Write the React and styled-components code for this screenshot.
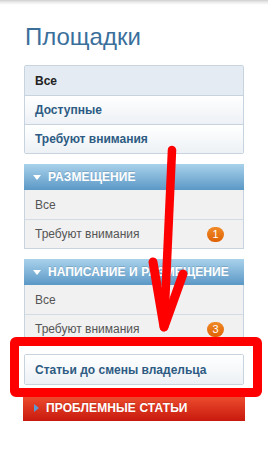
import React from "react";
import styled, { createGlobalStyle } from "styled-components";

const Global = createGlobalStyle`
  html, body { margin: 0; padding: 0; background: #fff; }
  body { font-family: "Liberation Sans", Arial, sans-serif; }
  * { box-sizing: border-box; }
`;

const Page = styled.div`
  position: relative;
  width: 268px;
  height: 451px;
  overflow: hidden;
  background: #fff;
`;

const TopShadow = styled.div`
  height: 5px;
  background: linear-gradient(#cfcfcf, #e9e9e9 40%, #fff);
`;

const Sidebar = styled.div`
  width: 220px;
  margin-left: 24px;
  padding-top: 18px;
  display: flex;
  flex-direction: column;
`;

const Title = styled.h1`
  margin: 0 0 14px 1px;
  font-size: 24px;
  font-weight: 400;
  line-height: 28px;
  color: #3a6f9c;
`;

const Box = styled.div`
  border: 1px solid #c7d4df;
  border-radius: 2px;
  display: flex;
  flex-direction: column;
  margin-bottom: ${(p) => p.$mb || 10}px;
`;

const NavRow = styled.div`
  height: 29px;
  display: flex;
  align-items: center;
  padding: 0 10px;
  font-size: 12px;
  font-weight: 700;
  color: ${(p) => (p.$active ? "#222" : "#2d5b83")};
  background: ${(p) =>
    p.$active ? "#e5ebf2" : "linear-gradient(#ffffff, #edf1f5)"};
  & + & { border-top: 1px solid #c7d4df; }
`;

const Section = styled.div`
  display: flex;
  flex-direction: column;
  border-left: 1px solid #c7d4df;
  border-right: 1px solid #c7d4df;
  border-bottom: 1px solid #c7d4df;
  margin-bottom: 10px;
`;

const Header = styled.div`
  height: 26px;
  margin: 0 -1px;
  display: flex;
  align-items: center;
  gap: 6px;
  padding-left: 9px;
  font-size: 12px;
  font-weight: 700;
  color: #fff;
  text-transform: uppercase;
  letter-spacing: 0.1px;
  text-shadow: 0 -1px 0 rgba(0, 0, 0, 0.15);
  background: ${(p) =>
    p.$red
      ? "linear-gradient(#ef4f30, #c8190d)"
      : "linear-gradient(#a9d2eb, #5b98c6)"};
`;

const Caret = styled.span`
  width: 0;
  height: 0;
  border-style: solid;
  ${(p) =>
    p.$right
      ? `border-width: 4px 0 4px 5px; border-color: transparent transparent transparent #5c9ad0; margin-left: 2px;`
      : `border-width: 5px 4px 0 4px; border-color: #fff transparent transparent transparent;`}
  margin-right: 1px;
`;

const SubRow = styled.div`
  height: 29px;
  display: flex;
  align-items: center;
  justify-content: space-between;
  padding: 0 19px 0 10px;
  font-size: 12px;
  color: #555;
  background: #f1f1f1;
  & + & { border-top: 1px solid #d3dce5; }
`;

const Badge = styled.span`
  min-width: 17px;
  height: 15px;
  border-radius: 8px;
  background: linear-gradient(#f08a26, #df6206);
  color: #fff;
  font-size: 11px;
  line-height: 15px;
  text-align: center;
`;

const Annotation = styled.div`
  position: absolute;
  left: 10px;
  top: 337px;
  width: 252px;
  height: 60px;
  border: 9px solid #ff0000;
  border-radius: 6px;
  pointer-events: none;
`;

const ArrowSvg = styled.svg`
  position: absolute;
  left: 0;
  top: 0;
  pointer-events: none;
`;

export default function App() {
  return (
    <Page>
      <Global />
      <TopShadow />
      <Sidebar>
        <Title>Площадки</Title>
        <Box>
          <NavRow $active>Все</NavRow>
          <NavRow>Доступные</NavRow>
          <NavRow>Требуют внимания</NavRow>
        </Box>
        <Section>
          <Header>
            <Caret />
            Размещение
          </Header>
          <SubRow>Все</SubRow>
          <SubRow>
            Требуют внимания<Badge>1</Badge>
          </SubRow>
        </Section>
        <Section>
          <Header>
            <Caret />
            Написание и размещение
          </Header>
          <SubRow>Все</SubRow>
          <SubRow>
            Требуют внимания<Badge>3</Badge>
          </SubRow>
        </Section>
        <Box $mb={10}>
          <NavRow>Статьи до смены владельца</NavRow>
        </Box>
        <Header $red>
          <Caret $right />
          Проблемные статьи
        </Header>
      </Sidebar>
      <Annotation />
      <ArrowSvg width="268" height="451" viewBox="0 0 268 451">
        <g stroke="#ff0000" strokeLinecap="round" strokeLinejoin="round" fill="none">
          <path d="M172 150 L164 327" strokeWidth="8.5" />
          <path d="M153 262 L164 327 L183 274" strokeWidth="9" />
        </g>
      </ArrowSvg>
    </Page>
  );
}
